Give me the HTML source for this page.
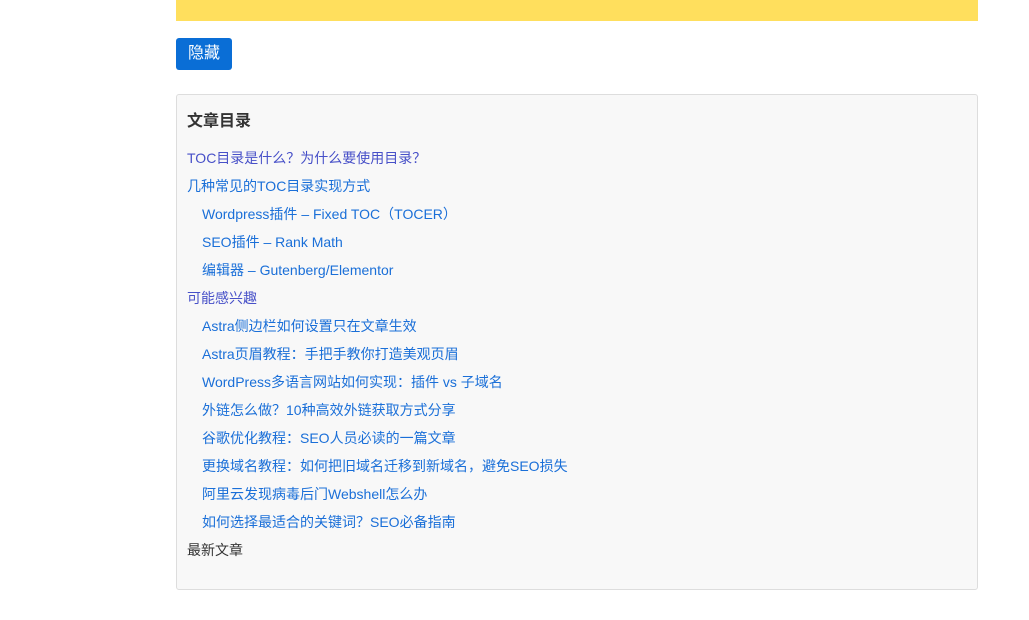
<!DOCTYPE html>
<html><head><meta charset="utf-8"><style>
body{margin:0;background:#fff;font-family:"Liberation Sans","Noto Sans CJK SC",sans-serif;width:1029px;height:620px;overflow:hidden;position:relative}
.bar{position:absolute;left:176px;top:0;width:802px;height:21px;background:#ffdf5d}
.btn{position:absolute;left:176px;top:38px;width:56px;height:32px;background:#0a6ed6;border-radius:3px;color:#fff;font-size:16px;line-height:32px;text-align:center}
.box{position:absolute;left:176px;top:94px;width:800px;height:494px;background:#f8f8f8;border:1px solid #ddd;border-radius:3px}
.t{position:absolute;left:10px;top:12px;font-size:16px;font-weight:bold;color:#333}
.i{position:absolute;font-size:14px;color:#1a6fd8;white-space:nowrap;line-height:20px}
</style></head><body>
<div class="bar"></div>
<div class="btn">隐藏</div>
<div class="box">
<div class="t">文章目录</div>
<div class="i" style="left:10px;top:53px;color:#4750c8">TOC目录是什么？为什么要使用目录？</div>
<div class="i" style="left:10px;top:81px">几种常见的TOC目录实现方式</div>
<div class="i" style="left:25px;top:109px">Wordpress插件 – Fixed TOC（TOCER）</div>
<div class="i" style="left:25px;top:137px">SEO插件 – Rank Math</div>
<div class="i" style="left:25px;top:165px">编辑器 – Gutenberg/Elementor</div>
<div class="i" style="left:10px;top:193px;color:#4750c8">可能感兴趣</div>
<div class="i" style="left:25px;top:221px">Astra侧边栏如何设置只在文章生效</div>
<div class="i" style="left:25px;top:249px">Astra页眉教程：手把手教你打造美观页眉</div>
<div class="i" style="left:25px;top:277px">WordPress多语言网站如何实现：插件 vs 子域名</div>
<div class="i" style="left:25px;top:305px">外链怎么做？10种高效外链获取方式分享</div>
<div class="i" style="left:25px;top:333px">谷歌优化教程：SEO人员必读的一篇文章</div>
<div class="i" style="left:25px;top:361px">更换域名教程：如何把旧域名迁移到新域名，避免SEO损失</div>
<div class="i" style="left:25px;top:389px">阿里云发现病毒后门Webshell怎么办</div>
<div class="i" style="left:25px;top:417px">如何选择最适合的关键词？SEO必备指南</div>
<div class="i" style="left:10px;top:445px;color:#333">最新文章</div>
</div>
</body></html>
